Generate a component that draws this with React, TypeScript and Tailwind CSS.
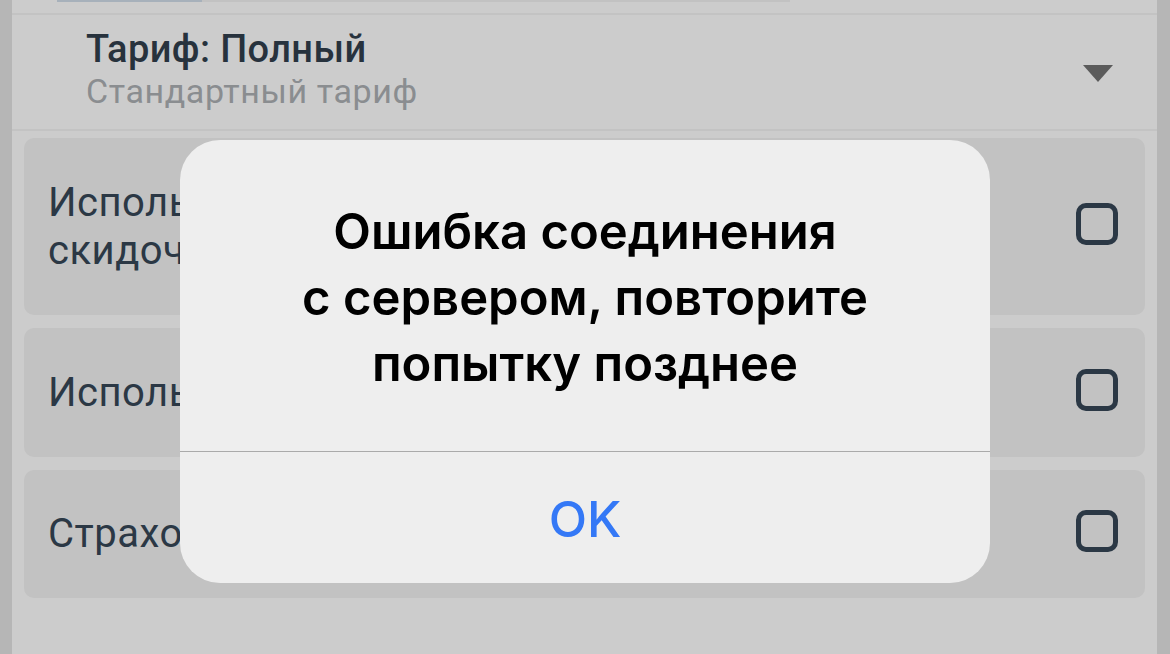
import React from "react";

function Checkbox() {
  return <div className="w-[42px] h-[42px] rounded-[10px] border-[5px] border-[#2b3845] shrink-0 -mt-[6px]" />;
}

export default function App() {
  return (
    <div className="relative w-[1170px] h-[654px] overflow-hidden flex bg-[#cccccc]" style={{ fontFamily: "Roboto, 'Noto Sans', sans-serif" }}>
      <div className="w-[12px] h-full bg-[#b6b6b6] shrink-0" />
      <div className="flex-1 flex flex-col bg-[#cccccc]">
        {/* cut-off element at top */}
        <div className="h-[13px] relative">
          <div className="flex h-[2px] ml-[45px] w-[733px]">
            <div className="w-[145px] bg-[#a7b1bb]" />
            <div className="flex-1 bg-[#c2c2c2]" />
          </div>
        </div>
        <div className="h-[2px] bg-[#c3c3c3]" />
        <div className="h-[114px] flex items-center pl-[74px] pr-[44px]">
          <div className="flex-1 flex flex-col -mt-[4px]">
            <div className="text-[38px] leading-[42px] font-medium text-[#27323d] tracking-[0.4px]">Тариф: Полный</div>
            <div className="text-[34px] leading-[42px] text-[#8a8d90] tracking-[0.6px]">Стандартный тариф</div>
          </div>
          <svg width="30" height="17" viewBox="0 0 30 17" className="mt-[2px]">
            <polygon points="0,0 30,0 15,17" fill="#5b5b5b" />
          </svg>
        </div>
        <div className="h-[2px] bg-[#c3c3c3]" />
        <div className="flex flex-col gap-[13px] px-[12px] pt-[7px]">
          <div className="h-[177px] rounded-[10px] bg-[#c2c2c2] flex items-center pl-[24px] pr-[27px]">
            <div className="flex-1 text-[40px] leading-[48px] text-[#2b3845] tracking-[0.5px]">
              <div>Использовать</div>
              <div>скидочную карту</div>
            </div>
            <Checkbox />
          </div>
          <div className="h-[129px] rounded-[10px] bg-[#c2c2c2] flex items-center pl-[24px] pr-[27px]">
            <div className="flex-1 text-[40px] leading-[48px] text-[#2b3845] tracking-[0.5px]">Использовать</div>
            <Checkbox />
          </div>
          <div className="h-[128px] rounded-[10px] bg-[#c2c2c2] flex items-center pl-[24px] pr-[27px]">
            <div className="flex-1 text-[40px] leading-[48px] text-[#2b3845] tracking-[0.5px]">Страховка</div>
            <Checkbox />
          </div>
        </div>
      </div>
      <div className="w-[13px] h-full bg-[#b6b6b6] shrink-0" />

      {/* alert dialog */}
      <div className="absolute left-[180px] top-[140px] w-[810px] h-[443px] rounded-[40px] bg-[#eeeeee] flex flex-col overflow-hidden" style={{ fontFamily: "Inter, Roboto, sans-serif" }}>
        <div className="h-[311px] flex flex-col items-center pt-[59px] text-[49px] leading-[66px] font-semibold text-black text-center">
          <div>Ошибка соединения</div>
          <div>с сервером, повторите</div>
          <div>попытку позднее</div>
        </div>
        <div className="h-[1px] bg-[#aaaaaa]" />
        <div className="flex-1 flex items-center justify-center pt-[2px]">
          <span className="text-[50px] leading-[60px] font-medium text-[#3478f6]">OK</span>
        </div>
      </div>
    </div>
  );
}
